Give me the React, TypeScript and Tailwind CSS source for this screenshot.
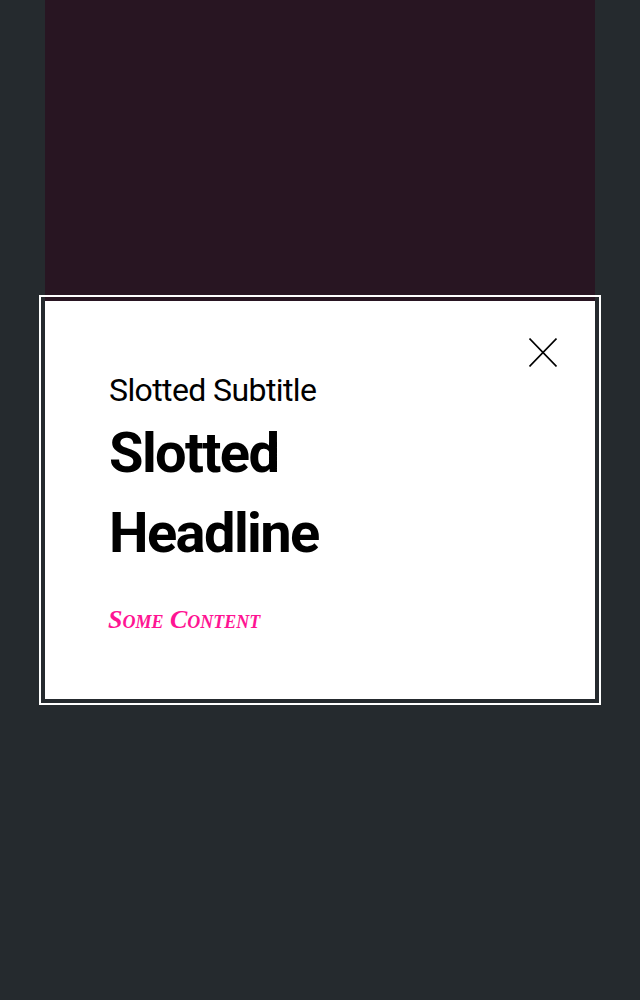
import React from 'react';

const App: React.FC = () => {
    return (
        <div className="relative min-h-screen bg-[#252a2e] font-['Roboto','Liberation_Sans',sans-serif]">
            {/* Page content behind the dialog */}
            <div className="mx-auto h-[340px] w-[550px] bg-[#281522]" />

            {/* Dialog */}
            <div className="fixed inset-0 flex items-center justify-center">
                <div className="relative w-[550px] bg-white px-16 pt-[69px] pb-[63px] outline-2 outline-offset-4 outline-white">
                    <button
                        type="button"
                        aria-label="Close"
                        className="absolute top-[37px] right-[38px] h-[29px] w-[28px] text-black"
                    >
                        <svg viewBox="0 0 28 29" className="h-full w-full" fill="none" stroke="currentColor" strokeWidth="1.6">
                            <path d="M0.5 0.5L27.5 28.5M27.5 0.5L0.5 28.5" />
                        </svg>
                    </button>

                    <p className="text-[32px] leading-[40px] tracking-[-0.6px] text-black">Slotted Subtitle</p>
                    <h2 className="mt-[3px] w-[300px] text-[56px] font-bold leading-[80px] tracking-[-1.6px] text-black">
                        Slotted Headline
                    </h2>
                    <p className="mt-[31px] -ml-px font-['Liberation_Serif',serif] text-[26px] leading-[32px] font-bold italic [font-variant:small-caps] text-[#ff1493]">
                        Some Content
                    </p>
                </div>
            </div>
        </div>
    );
};

export default App;
